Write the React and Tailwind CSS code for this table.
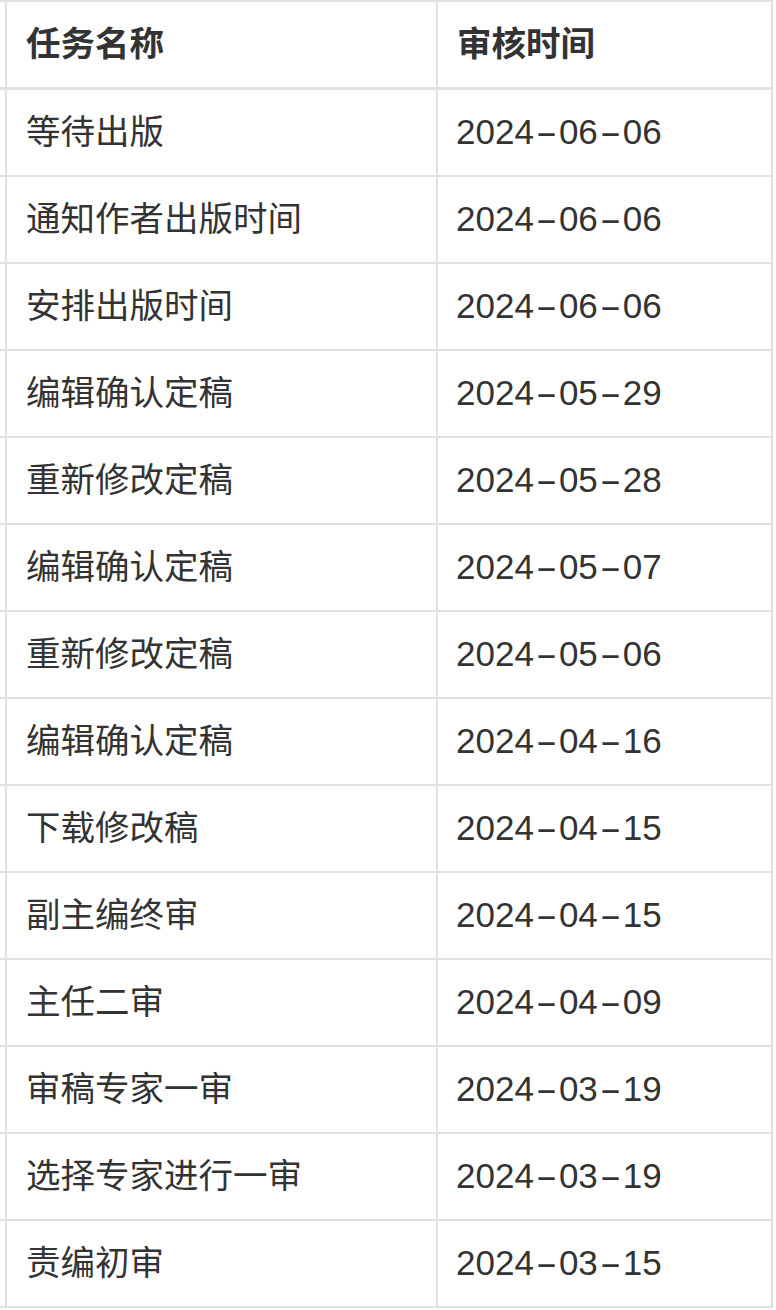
const ROWS = [
  ['等待出版', '2024-06-06'],
  ['通知作者出版时间', '2024-06-06'],
  ['安排出版时间', '2024-06-06'],
  ['编辑确认定稿', '2024-05-29'],
  ['重新修改定稿', '2024-05-28'],
  ['编辑确认定稿', '2024-05-07'],
  ['重新修改定稿', '2024-05-06'],
  ['编辑确认定稿', '2024-04-16'],
  ['下载修改稿', '2024-04-15'],
  ['副主编终审', '2024-04-15'],
  ['主任二审', '2024-04-09'],
  ['审稿专家一审', '2024-03-19'],
  ['选择专家进行一审', '2024-03-19'],
  ['责编初审', '2024-03-15'],
]

// hyphen drawn wider, like the PingFang dash in the screenshot
function DateText({ value }) {
  const parts = value.split('-')
  return (
    <span>
      {parts.map((p, i) => (
        <span key={i}>
          {i > 0 && <span className="inline-block w-[25px] text-center scale-x-[1.9]">-</span>}
          {p}
        </span>
      ))}
    </span>
  )
}

export default function App() {
  return (
    <div className="w-[776px] h-[1310px] bg-white text-[#333333] font-['Liberation_Sans','Noto_Sans_CJK_SC',sans-serif]">
      <div className="w-[773px] border-t-2 border-[#e1e1e1]">
        <div className="flex h-[88px] border-b-[3px] border-[#e1e1e1]">
          <div className="w-[7px] border-r-2 border-[#e1e1e1]"></div>
          <div className="w-[431px] border-r-2 border-[#e1e1e1] flex items-center pl-[19px] text-[34.5px] font-bold">任务名称</div>
          <div className="w-[335px] border-r-2 border-[#e1e1e1] flex items-center pl-[19px] text-[34.5px] font-bold">审核时间</div>
        </div>
        {ROWS.map(([name, date], i) => (
          <div key={i} className="flex h-[87px] border-b-2 border-[#e1e1e1]">
            <div className="w-[7px] border-r-2 border-[#e1e1e1]"></div>
            <div className="w-[431px] border-r-2 border-[#e1e1e1] flex items-center pl-[19px] text-[34.5px]">{name}</div>
            <div className="w-[335px] border-r-2 border-[#e1e1e1] flex items-center pl-[18px] text-[35px]"><DateText value={date} /></div>
          </div>
        ))}
      </div>
    </div>
  )
}
